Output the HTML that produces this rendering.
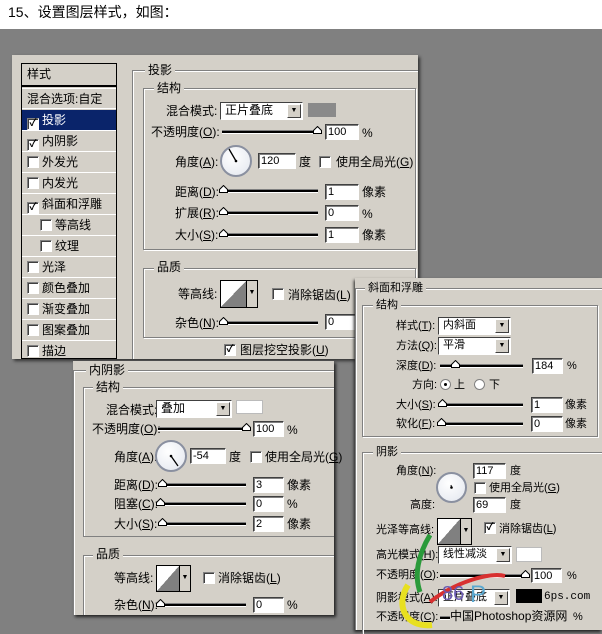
<!DOCTYPE html>
<html><head><meta charset="utf-8"><style>
*{margin:0;padding:0;box-sizing:border-box}
body{width:602px;height:634px;overflow:hidden;background:#fff;position:relative;font-family:"Liberation Sans","Noto Sans CJK SC","WenQuanYi Zen Hei",sans-serif;font-size:12px;color:#000}
div,span{position:absolute}
.t{white-space:nowrap;line-height:14px}
.p{background:#d4d0c8}
.g{border:1px solid #808080;box-shadow:1px 1px 0 #fff inset,1px 1px 0 #fff}
.nc{box-shadow:1px 1px 0 #fff inset}
.lg{background:#d4d0c8;padding:0 3px;line-height:14px;white-space:nowrap}
.in{background:#fff;border-top:1px solid #404040;border-left:1px solid #404040;border-right:1px solid #fff;border-bottom:1px solid #fff;box-shadow:inset 1px 1px 0 #808080;line-height:14px;padding-left:2px;font-size:11px}
.sl{height:4px;border-top:1px solid #808080;border-bottom:1px solid #fff;background:#000}
.cb{width:12px;height:12px;background:#fff;border-top:1px solid #808080;border-left:1px solid #808080;border-right:1px solid #fff;border-bottom:1px solid #fff;box-shadow:inset 1px 1px 0 #404040;font-size:10px;line-height:10px;text-align:center;font-weight:bold}
.ic{position:relative!important;display:inline-block;top:1px;margin-right:3px;vertical-align:-1px}
.sel{background:#fff;border-top:1px solid #404040;border-left:1px solid #404040;border-right:1px solid #fff;border-bottom:1px solid #fff;padding-left:4px;line-height:15px}
.sel b{position:absolute;right:1px;top:1px;width:14px;bottom:1px;background:#d4d0c8;border:1px solid;border-color:#fff #404040 #404040 #fff;font-size:7px;text-align:center;line-height:12px;font-weight:normal}
.dial{border-radius:50%;border:2px solid #8a90a0;background:radial-gradient(circle at 40% 35%,#fff,#e2e6ee)}
.cont{background:linear-gradient(to bottom right,#fff 50%,#808080 50%);border:1px solid #000}
.cont b{position:absolute;right:-12px;top:-1px;width:12px;bottom:-1px;background:#d4d0c8;border:1px solid #000;font-size:7px;text-align:center;line-height:24px;font-weight:normal}
.th{width:9px;height:8px}
.li{left:0;width:94px;height:21px;border-bottom:1px solid #fff;padding-left:5px;line-height:20px;white-space:nowrap}
</style></head><body>
<div class="t" style="left:8px;top:3px;font-size:14px;line-height:18px">15、设置图层样式，如图：</div>
<div style="left:0;top:29px;width:602px;height:605px;background:#808080"></div>

<!-- main dialog -->
<div class="p" style="left:12px;top:55px;width:406px;height:304px;box-shadow:2px 2px 3px #333"></div>
<div style="left:21px;top:63px;width:96px;height:296px;border:1px solid #000;background:#d4d0c8">
 <div class="li" style="top:0;height:23px;border-bottom:2px solid #000">样式</div>
 <div class="li" style="top:24px;border-top:1px solid #fff">混合选项:自定</div>
 <div class="li" style="top:46px;background:#0a246a;color:#fff"><span class="cb ic" style="color:#000">✓</span>投影</div>
 <div class="li" style="top:67px"><span class="cb ic">✓</span>内阴影</div>
 <div class="li" style="top:88px"><span class="cb ic"></span>外发光</div>
 <div class="li" style="top:109px"><span class="cb ic"></span>内发光</div>
 <div class="li" style="top:130px"><span class="cb ic">✓</span>斜面和浮雕</div>
 <div class="li" style="top:151px;padding-left:18px"><span class="cb ic"></span>等高线</div>
 <div class="li" style="top:172px;padding-left:18px"><span class="cb ic"></span>纹理</div>
 <div class="li" style="top:193px"><span class="cb ic"></span>光泽</div>
 <div class="li" style="top:214px"><span class="cb ic"></span>颜色叠加</div>
 <div class="li" style="top:235px"><span class="cb ic"></span>渐变叠加</div>
 <div class="li" style="top:256px"><span class="cb ic"></span>图案叠加</div>
 <div class="li" style="top:277px;border-bottom:0"><span class="cb ic"></span>描边</div>
</div>
<div class="g nc" style="left:132px;top:70px;width:286px;height:289px;border-right:0;border-bottom:0"></div>
<div class="lg" style="left:145px;top:63px">投影</div>
<div class="g" style="left:143px;top:88px;width:273px;height:162px"></div>
<div class="lg" style="left:154px;top:81px">结构</div>
<div class="t" style="left:166px;top:104px">混合模式:</div>
<div class="sel" style="left:220px;top:102px;width:83px;height:18px">正片叠底<b>▼</b></div>
<div style="left:308px;top:103px;width:28px;height:14px;background:#8a8a8a"></div>
<div class="t" style="left:151px;top:125px">不透明度(<u>O</u>):</div>
<div class="sl" style="left:222px;top:130px;width:96px"></div>
<svg class="th" style="position:absolute;left:313px;top:126px" viewBox="0 0 9 8"><path d="M.5 7.5V4.5L4.5.5 8.5 4.5V7.5Z" fill="#fff" stroke="#000"/></svg>
<div class="in" style="left:325px;top:124px;width:34px;height:16px">100</div>
<div class="t" style="left:362px;top:126px">%</div>
<div class="t" style="left:175px;top:155px">角度(<u>A</u>):</div>
<div class="dial" style="left:220px;top:145px;width:32px;height:32px"></div>
<svg style="position:absolute;left:220px;top:145px" width="32" height="32"><line x1="16" y1="16" x2="9" y2="4" stroke="#000" stroke-width="1.3"/><circle cx="16" cy="16" r="1.3"/></svg>
<div class="in" style="left:258px;top:153px;width:38px;height:16px">120</div>
<div class="t" style="left:299px;top:155px">度</div>
<div class="cb" style="left:319px;top:156px"></div>
<div class="t" style="left:336px;top:155px">使用全局光(<u>G</u>)</div>
<div class="t" style="left:175px;top:185px">距离(<u>D</u>):</div>
<div class="sl" style="left:222px;top:189px;width:96px"></div>
<svg class="th" style="position:absolute;left:219px;top:185px" viewBox="0 0 9 8"><path d="M.5 7.5V4.5L4.5.5 8.5 4.5V7.5Z" fill="#fff" stroke="#000"/></svg>
<div class="in" style="left:325px;top:184px;width:34px;height:16px">1</div>
<div class="t" style="left:362px;top:185px">像素</div>
<div class="t" style="left:175px;top:206px">扩展(<u>R</u>):</div>
<div class="sl" style="left:222px;top:211px;width:96px"></div>
<svg class="th" style="position:absolute;left:219px;top:207px" viewBox="0 0 9 8"><path d="M.5 7.5V4.5L4.5.5 8.5 4.5V7.5Z" fill="#fff" stroke="#000"/></svg>
<div class="in" style="left:325px;top:205px;width:34px;height:16px">0</div>
<div class="t" style="left:362px;top:207px">%</div>
<div class="t" style="left:175px;top:228px">大小(<u>S</u>):</div>
<div class="sl" style="left:222px;top:233px;width:96px"></div>
<svg class="th" style="position:absolute;left:219px;top:229px" viewBox="0 0 9 8"><path d="M.5 7.5V4.5L4.5.5 8.5 4.5V7.5Z" fill="#fff" stroke="#000"/></svg>
<div class="in" style="left:325px;top:227px;width:34px;height:16px">1</div>
<div class="t" style="left:362px;top:228px">像素</div>
<div class="g" style="left:143px;top:268px;width:273px;height:70px"></div>
<div class="lg" style="left:154px;top:260px">品质</div>
<div class="t" style="left:178px;top:287px">等高线:</div>
<div class="cont" style="left:220px;top:280px;width:27px;height:28px"><b>▼</b></div>
<div class="cb" style="left:272px;top:288px"></div>
<div class="t" style="left:288px;top:288px">消除锯齿(<u>L</u>)</div>
<div class="t" style="left:175px;top:316px">杂色(<u>N</u>):</div>
<div class="sl" style="left:222px;top:321px;width:96px"></div>
<svg class="th" style="position:absolute;left:219px;top:317px" viewBox="0 0 9 8"><path d="M.5 7.5V4.5L4.5.5 8.5 4.5V7.5Z" fill="#fff" stroke="#000"/></svg>
<div class="in" style="left:325px;top:314px;width:34px;height:16px">0</div>
<div class="cb" style="left:224px;top:344px">✓</div>
<div class="t" style="left:240px;top:343px">图层挖空投影(<u>U</u>)</div>

<!-- inner shadow -->
<div class="p" style="left:73px;top:361px;width:261px;height:254px;box-shadow:2px 2px 3px #222"></div>
<div class="g nc" style="left:73px;top:370px;width:261px;height:245px;border-right:0;border-bottom:0"></div>
<div class="lg" style="left:86px;top:363px">内阴影</div>
<div class="g nc" style="left:83px;top:387px;width:251px;height:150px;border-right:0"></div>
<div class="lg" style="left:93px;top:380px">结构</div>
<div class="t" style="left:106px;top:403px">混合模式:</div>
<div class="sel" style="left:156px;top:400px;width:76px;height:18px">叠加<b>▼</b></div>
<div style="left:236px;top:400px;width:27px;height:14px;background:#fff;border:1px solid #bbb"></div>
<div class="t" style="left:92px;top:422px">不透明度(<u>O</u>):</div>
<div class="sl" style="left:158px;top:427px;width:88px"></div>
<svg class="th" style="position:absolute;left:242px;top:423px" viewBox="0 0 9 8"><path d="M.5 7.5V4.5L4.5.5 8.5 4.5V7.5Z" fill="#fff" stroke="#000"/></svg>
<div class="in" style="left:253px;top:421px;width:31px;height:16px">100</div>
<div class="t" style="left:287px;top:423px">%</div>
<div class="t" style="left:114px;top:450px">角度(<u>A</u>):</div>
<div class="dial" style="left:155px;top:440px;width:32px;height:32px"></div>
<svg style="position:absolute;left:155px;top:440px" width="32" height="32"><line x1="16" y1="16" x2="23" y2="26" stroke="#000" stroke-width="1.3"/><circle cx="16" cy="16" r="1.3"/></svg>
<div class="in" style="left:190px;top:448px;width:36px;height:16px">-54</div>
<div class="t" style="left:229px;top:450px">度</div>
<div class="cb" style="left:250px;top:451px"></div>
<div class="t" style="left:265px;top:450px">使用全局光(<u>G</u>)</div>
<div class="t" style="left:114px;top:478px">距离(<u>D</u>):</div>
<div class="sl" style="left:158px;top:483px;width:88px"></div>
<svg class="th" style="position:absolute;left:158px;top:479px" viewBox="0 0 9 8"><path d="M.5 7.5V4.5L4.5.5 8.5 4.5V7.5Z" fill="#fff" stroke="#000"/></svg>
<div class="in" style="left:253px;top:477px;width:31px;height:16px">3</div>
<div class="t" style="left:287px;top:478px">像素</div>
<div class="t" style="left:114px;top:497px">阻塞(<u>C</u>):</div>
<div class="sl" style="left:158px;top:502px;width:88px"></div>
<svg class="th" style="position:absolute;left:156px;top:498px" viewBox="0 0 9 8"><path d="M.5 7.5V4.5L4.5.5 8.5 4.5V7.5Z" fill="#fff" stroke="#000"/></svg>
<div class="in" style="left:253px;top:496px;width:31px;height:16px">0</div>
<div class="t" style="left:287px;top:497px">%</div>
<div class="t" style="left:114px;top:517px">大小(<u>S</u>):</div>
<div class="sl" style="left:158px;top:522px;width:88px"></div>
<svg class="th" style="position:absolute;left:158px;top:518px" viewBox="0 0 9 8"><path d="M.5 7.5V4.5L4.5.5 8.5 4.5V7.5Z" fill="#fff" stroke="#000"/></svg>
<div class="in" style="left:253px;top:516px;width:31px;height:16px">2</div>
<div class="t" style="left:287px;top:517px">像素</div>
<div class="g nc" style="left:83px;top:555px;width:251px;height:60px;border-right:0;border-bottom:0"></div>
<div class="lg" style="left:93px;top:547px">品质</div>
<div class="t" style="left:114px;top:571px">等高线:</div>
<div class="cont" style="left:156px;top:565px;width:24px;height:27px"><b style="line-height:23px">▼</b></div>
<div class="cb" style="left:203px;top:572px"></div>
<div class="t" style="left:218px;top:571px">消除锯齿(<u>L</u>)</div>
<div class="t" style="left:114px;top:598px">杂色(<u>N</u>):</div>
<div class="sl" style="left:158px;top:603px;width:88px"></div>
<svg class="th" style="position:absolute;left:156px;top:599px" viewBox="0 0 9 8"><path d="M.5 7.5V4.5L4.5.5 8.5 4.5V7.5Z" fill="#fff" stroke="#000"/></svg>
<div class="in" style="left:253px;top:597px;width:31px;height:16px">0</div>
<div class="t" style="left:287px;top:598px">%</div>

<!-- bevel -->
<div class="p" style="left:355px;top:278px;width:247px;height:352px;box-shadow:-1px 2px 3px #222"></div>
<div class="g nc" style="left:355px;top:288px;width:247px;height:342px;border-right:0;border-bottom:0"></div>
<div class="lg" style="left:365px;top:281px;font-size:11px">斜面和浮雕</div>
<div class="g" style="left:362px;top:305px;width:236px;height:132px"></div>
<div class="lg" style="left:373px;top:298px;font-size:11px">结构</div>
<div class="t" style="left:396px;top:319px;font-size:11px">样式(<u>T</u>):</div>
<div class="sel" style="left:438px;top:317px;width:73px;height:18px;font-size:11px">内斜面<b>▼</b></div>
<div class="t" style="left:396px;top:339px;font-size:11px">方法(<u>Q</u>):</div>
<div class="sel" style="left:438px;top:337px;width:73px;height:18px;font-size:11px">平滑<b>▼</b></div>
<div class="t" style="left:396px;top:359px;font-size:11px">深度(<u>D</u>):</div>
<div class="sl" style="left:440px;top:364px;width:83px"></div>
<svg class="th" style="position:absolute;left:451px;top:360px" viewBox="0 0 9 8"><path d="M.5 7.5V4.5L4.5.5 8.5 4.5V7.5Z" fill="#fff" stroke="#000"/></svg>
<div class="in" style="left:532px;top:358px;width:31px;height:16px">184</div>
<div class="t" style="left:567px;top:359px;font-size:11px">%</div>
<div class="t" style="left:412px;top:378px;font-size:11px">方向:</div>
<div style="left:440px;top:379px;width:11px;height:11px;border-radius:50%;background:#fff;border:1px solid #808080"><span style="left:3px;top:3px;width:3px;height:3px;background:#000;border-radius:50%"></span></div>
<div class="t" style="left:454px;top:378px;font-size:11px">上</div>
<div style="left:474px;top:379px;width:11px;height:11px;border-radius:50%;background:#fff;border:1px solid #808080"></div>
<div class="t" style="left:489px;top:378px;font-size:11px">下</div>
<div class="t" style="left:396px;top:398px;font-size:11px">大小(<u>S</u>):</div>
<div class="sl" style="left:440px;top:403px;width:83px"></div>
<svg class="th" style="position:absolute;left:438px;top:399px" viewBox="0 0 9 8"><path d="M.5 7.5V4.5L4.5.5 8.5 4.5V7.5Z" fill="#fff" stroke="#000"/></svg>
<div class="in" style="left:531px;top:397px;width:32px;height:16px">1</div>
<div class="t" style="left:565px;top:398px;font-size:11px">像素</div>
<div class="t" style="left:396px;top:417px;font-size:11px">软化(<u>F</u>):</div>
<div class="sl" style="left:440px;top:422px;width:83px"></div>
<svg class="th" style="position:absolute;left:437px;top:418px" viewBox="0 0 9 8"><path d="M.5 7.5V4.5L4.5.5 8.5 4.5V7.5Z" fill="#fff" stroke="#000"/></svg>
<div class="in" style="left:531px;top:416px;width:32px;height:16px">0</div>
<div class="t" style="left:565px;top:417px;font-size:11px">像素</div>
<div class="g nc" style="left:362px;top:452px;width:240px;height:182px;border-right:0;border-bottom:0"></div>
<div class="lg" style="left:373px;top:445px;font-size:11px">阴影</div>
<div class="t" style="left:396px;top:464px;font-size:11px">角度(<u>N</u>):</div>
<div class="dial" style="left:436px;top:472px;width:31px;height:31px"></div>
<svg style="position:absolute;left:436px;top:472px" width="31" height="31"><circle cx="15.5" cy="15.5" r="1.3"/><line x1="15.5" y1="15.5" x2="15" y2="13" stroke="#000"/></svg>
<div class="in" style="left:473px;top:463px;width:33px;height:16px">117</div>
<div class="t" style="left:510px;top:464px;font-size:11px">度</div>
<div class="cb" style="left:474px;top:482px"></div>
<div class="t" style="left:489px;top:481px;font-size:11px">使用全局光(<u>G</u>)</div>
<div class="t" style="left:410px;top:498px;font-size:11px">高度:</div>
<div class="in" style="left:473px;top:497px;width:33px;height:16px">69</div>
<div class="t" style="left:510px;top:498px;font-size:11px">度</div>
<div class="t" style="left:376px;top:523px;font-size:11px">光泽等高线:</div>
<div class="cont" style="left:437px;top:518px;width:24px;height:27px"><b style="line-height:23px">▼</b></div>
<div class="cb" style="left:484px;top:522px">✓</div>
<div class="t" style="left:499px;top:522px;font-size:11px">消除锯齿(<u>L</u>)</div>
<div class="t" style="left:376px;top:548px;font-size:11px">高光模式(<u>H</u>):</div>
<div class="sel" style="left:438px;top:546px;width:74px;height:18px;font-size:11px">线性减淡<b>▼</b></div>
<div style="left:516px;top:547px;width:26px;height:15px;background:#fff;border:1px solid #bbb"></div>
<div class="t" style="left:376px;top:568px;font-size:11px">不透明度(<u>O</u>):</div>
<div class="sl" style="left:440px;top:574px;width:86px"></div>
<svg class="th" style="position:absolute;left:521px;top:570px" viewBox="0 0 9 8"><path d="M.5 7.5V4.5L4.5.5 8.5 4.5V7.5Z" fill="#fff" stroke="#000"/></svg>
<div class="in" style="left:531px;top:568px;width:31px;height:15px">100</div>
<div class="t" style="left:567px;top:569px;font-size:11px">%</div>
<div class="t" style="left:376px;top:591px;font-size:11px">阴影模式(<u>A</u>):</div>
<div class="sel" style="left:438px;top:589px;width:72px;height:18px;font-size:11px">正片叠底<b>▼</b></div>
<div style="left:516px;top:589px;width:26px;height:14px;background:#000"></div>
<div class="t" style="left:544px;top:590px;font-size:11px;font-family:'Liberation Mono',monospace">6ps.com</div>
<div class="t" style="left:376px;top:610px;font-size:11px">不透明度(<u>C</u>):</div>
<div class="sl" style="left:440px;top:616px;width:86px"></div>
<div class="t" style="left:450px;top:609px;font-size:12px;background:#d4d0c8">中国Photoshop资源网</div>
<div class="t" style="left:573px;top:610px;font-size:11px">%</div>
<svg style="position:absolute;left:390px;top:530px" width="120" height="104"><path d="M40 5C28 25 24 45 30 62" stroke="#2a9a3a" stroke-width="5" fill="none"/><path d="M40 72C65 52 100 42 115 46" stroke="#d83030" stroke-width="4" fill="none"/><path d="M18 55C5 75 15 98 42 95" stroke="#e8e020" stroke-width="6" fill="none"/><text x="52" y="70" font-size="20" fill="#6a5ab0" font-family="Liberation Sans">86</text><text x="80" y="72" font-size="24" fill="#5aa8d0" font-family="Liberation Sans">P</text></svg>
</body></html>
